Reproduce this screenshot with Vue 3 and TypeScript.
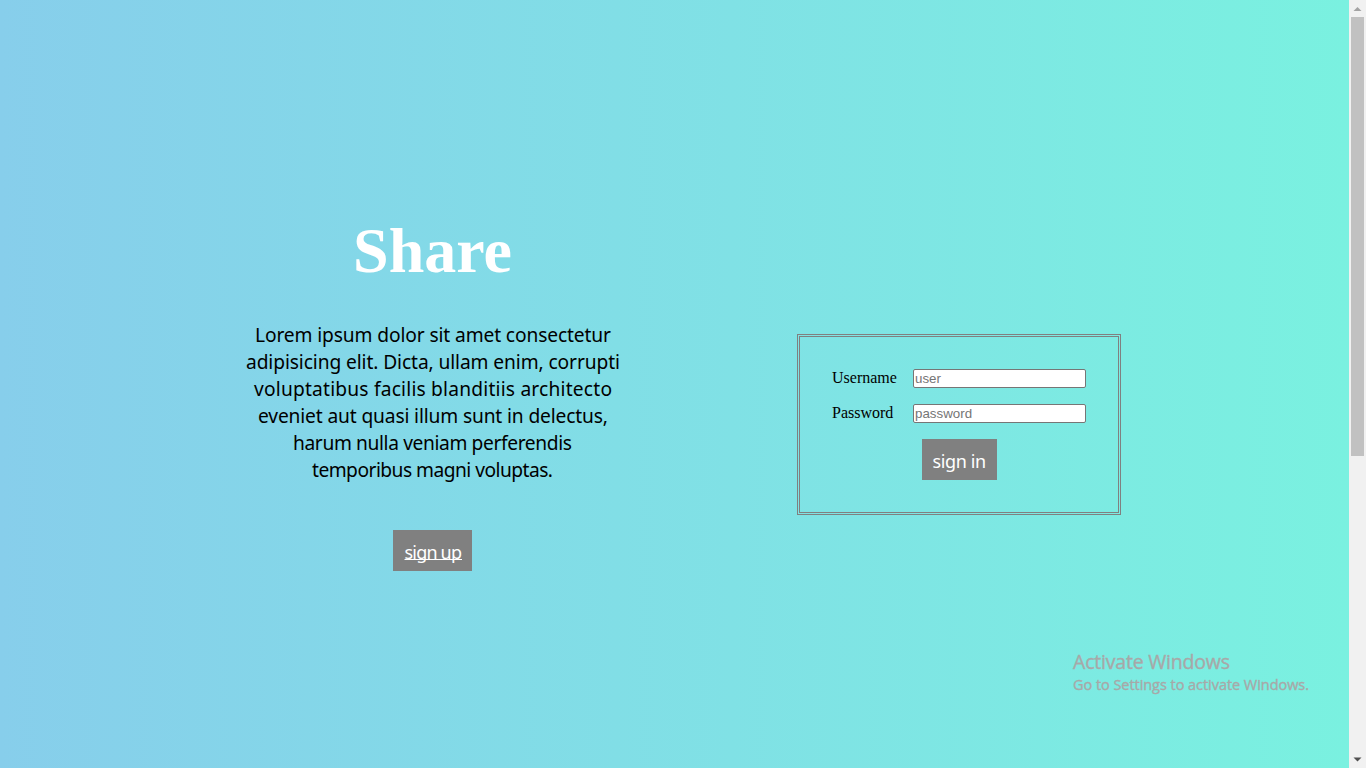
<script setup lang="ts">
import { ref } from 'vue'

interface Line {
  text: string
  width: number
}

const intro: Line[] = [
  { text: 'Lorem ipsum dolor sit amet consectetur', width: 356 },
  { text: 'adipisicing elit. Dicta, ullam enim, corrupti', width: 374 },
  { text: 'voluptatibus facilis blanditiis architecto', width: 358 },
  { text: 'eveniet aut quasi illum sunt in delectus,', width: 350 },
  { text: 'harum nulla veniam perferendis', width: 279 },
  { text: 'temporibus magni voluptas.', width: 241 },
]

const username = ref('')
const password = ref('')
</script>

<template>
  <div class="window">
    <main class="page">
      <section class="intro">
        <h1>Share</h1>
        <p>
          <svg v-for="line in intro" :key="line.text" :width="line.width" height="27">
            <text x="0" y="22" :textLength="line.width">{{ line.text }}</text>
          </svg>
        </p>
        <a class="button" href="#">
          <svg width="58" height="27">
            <text x="0.5" y="18.5" textLength="57.5">sign up</text>
            <path d="M0.5 19.5H58" stroke="#fff" />
          </svg>
        </a>
      </section>
      <form class="login" @submit.prevent>
        <div class="fields">
          <label for="user">Username</label>
          <input id="user" v-model="username" type="text" placeholder="user" />
          <label for="pass">Password</label>
          <input id="pass" v-model="password" type="password" placeholder="password" />
        </div>
        <button class="button" type="submit">
          <svg width="54" height="27">
            <text x="0.5" y="18.5" textLength="53.5">sign in</text>
          </svg>
        </button>
      </form>
    </main>
    <div class="scrollbar">
      <svg width="17" height="17"><path d="M4.5 11L8.5 7L12.5 11Z" fill="#a3a3a3" /></svg>
      <div class="thumb"></div>
      <svg width="17" height="17"><path d="M4.5 6.5L8.5 10.5L12.5 6.5Z" fill="#505050" /></svg>
    </div>
    <svg class="notice" width="240" height="50">
      <text class="notice-title" x="0" y="21" textLength="157">Activate Windows</text>
      <text class="notice-body" x="0" y="42" textLength="236">Go to Settings to activate Windows.</text>
    </svg>
  </div>
</template>

<style>
body {
  margin: 0;
  overflow: hidden;
}
</style>

<style scoped>
.window {
  display: flex;
  height: 768px;
  position: relative;
  font-family: 'Liberation Serif', serif;
}
.page {
  width: 1349px;
  box-sizing: border-box;
  display: flex;
  align-items: flex-start;
  padding-left: 232px;
  gap: 164px;
  background: linear-gradient(to right, #87ceeb, #7af1e0);
}
.intro {
  width: 401px;
  padding-top: 214px;
  display: flex;
  flex-direction: column;
  align-items: center;
}
h1 {
  margin: 0;
  height: 74px;
  line-height: 74px;
  font-size: 64px;
  color: #fff;
}
p {
  margin: 32px 0 48px;
  display: flex;
  flex-direction: column;
  align-items: center;
  font: 19.2px 'Comic Sans MS', 'Noto Sans', sans-serif;
}
svg {
  display: block;
  overflow: visible;
}
.button {
  box-sizing: border-box;
  height: 41px;
  padding: 10px 10.5px;
  border: 0;
  background: #808080;
  font: 18px 'Comic Sans MS', 'Noto Sans', sans-serif;
}
.button text {
  fill: #fff;
}
.login {
  box-sizing: border-box;
  width: 324px;
  height: 181px;
  margin-top: 334px;
  padding: 32px;
  border: 3px double #808080;
  display: flex;
  flex-direction: column;
  align-items: center;
  gap: 16px;
}
.fields {
  display: grid;
  grid-template-columns: 65px 173px;
  column-gap: 16px;
  row-gap: 16px;
  font-size: 16px;
}
label {
  line-height: 18px;
  height: 19px;
}
input {
  box-sizing: border-box;
  width: 173px;
  height: 19px;
  margin: 0;
  padding: 0 1px;
  border: 1px solid #767676;
  border-radius: 2px;
  background: #fff;
  font: 13.333px 'Liberation Sans', sans-serif;
}
input::placeholder {
  color: #757575;
}
.scrollbar {
  width: 17px;
  display: flex;
  flex-direction: column;
  align-items: center;
  background: #f1f1f1;
}
.thumb {
  width: 13px;
  height: 439px;
  margin-bottom: 295px;
  background: #c1c1c1;
}
.notice {
  position: absolute;
  left: 1073px;
  top: 648px;
  font-family: 'Segoe UI', 'Open Sans', sans-serif;
}
.notice text {
  fill: #a8a8a8;
  stroke: #a8a8a8;
  stroke-width: 0.35px;
}
.notice-title {
  font-size: 19.5px;
}
.notice-body {
  font-size: 14.5px;
}
</style>
